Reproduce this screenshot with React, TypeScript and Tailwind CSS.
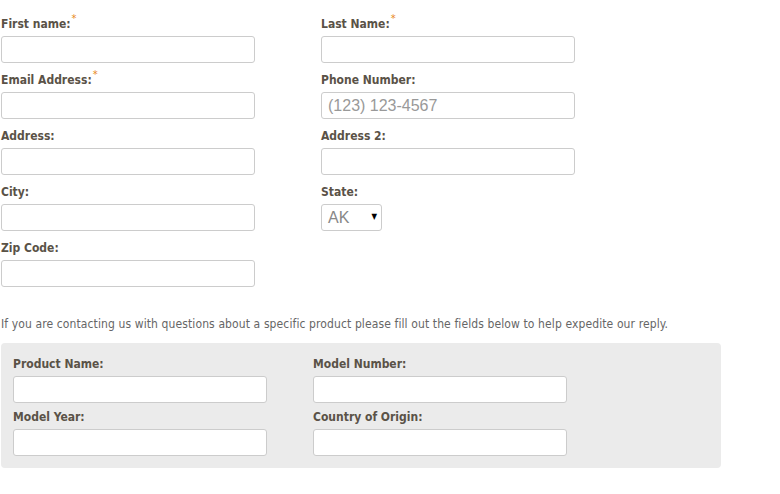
import React from "react";

const labelCls =
  "block h-[16px] leading-[16px] mb-[4px] text-[12px] font-bold text-[#5a5247] whitespace-nowrap";
const inputCls =
  "block w-[254px] h-[27px] border border-[#cccccc] rounded-[3px] bg-white px-[6px] text-[16px] text-[#555] outline-none";

function Star() {
  return (
    <span className="relative top-[-6px] ml-[1px] text-[11px] font-normal text-[#e8891c]">*</span>
  );
}

function Field({
  label,
  required,
  placeholder,
  mb = "mb-[9px]",
}: {
  label: string;
  required?: boolean;
  placeholder?: string;
  mb?: string;
}) {
  return (
    <div className={mb}>
      <label className={labelCls}>
        {label}
        {required && <Star />}
      </label>
      <input
        className={inputCls + " placeholder:text-[#999]"}
        placeholder={placeholder}
        style={{ fontFamily: "'Liberation Sans', Arial, sans-serif" }}
      />
    </div>
  );
}

export default function App() {
  return (
    <div
      className="w-[780px] h-[494px] bg-white pl-[1px] pt-[16px]"
      style={{ fontFamily: "'DejaVu Sans Condensed', 'DejaVu Sans', Tahoma, sans-serif" }}
    >
      <div className="grid grid-cols-[320px_320px]">
        <Field label="First name:" required />
        <Field label="Last Name:" required />
        <Field label="Email Address:" required />
        <Field label="Phone Number:" placeholder="(123) 123-4567" />
        <Field label="Address:" />
        <Field label="Address 2:" />
        <Field label="City:" />
        <div className="mb-[9px]">
          <label className={labelCls}>State:</label>
          <div className="relative flex items-center w-[61px] h-[27px] border border-[#cccccc] rounded-[3px] bg-white pl-[6px]">
            <span
              className="text-[16px] text-[#888]"
              style={{ fontFamily: "'Liberation Sans', Arial, sans-serif" }}
            >
              AK
            </span>
            <span className="absolute right-[4px] top-[8px] text-[8px] text-black leading-none">▼</span>
          </div>
        </div>
        <Field label="Zip Code:" />
      </div>

      <p className="mt-[20px] text-[12px] leading-[16px] tracking-[0.11px] text-[#666] whitespace-nowrap">
        If you are contacting us with questions about a specific product please fill out the fields below to help expedite our reply.
      </p>

      <div className="mt-[11px] w-[720px] rounded-[4px] bg-[#ebebeb] pl-[12px] pt-[13px] pb-[6px]">
        <div className="grid grid-cols-[300px_300px]">
          <Field label="Product Name:" mb="mb-[6px]" />
          <Field label="Model Number:" mb="mb-[6px]" />
          <Field label="Model Year:" mb="mb-[6px]" />
          <Field label="Country of Origin:" mb="mb-[6px]" />
        </div>
      </div>
    </div>
  );
}
